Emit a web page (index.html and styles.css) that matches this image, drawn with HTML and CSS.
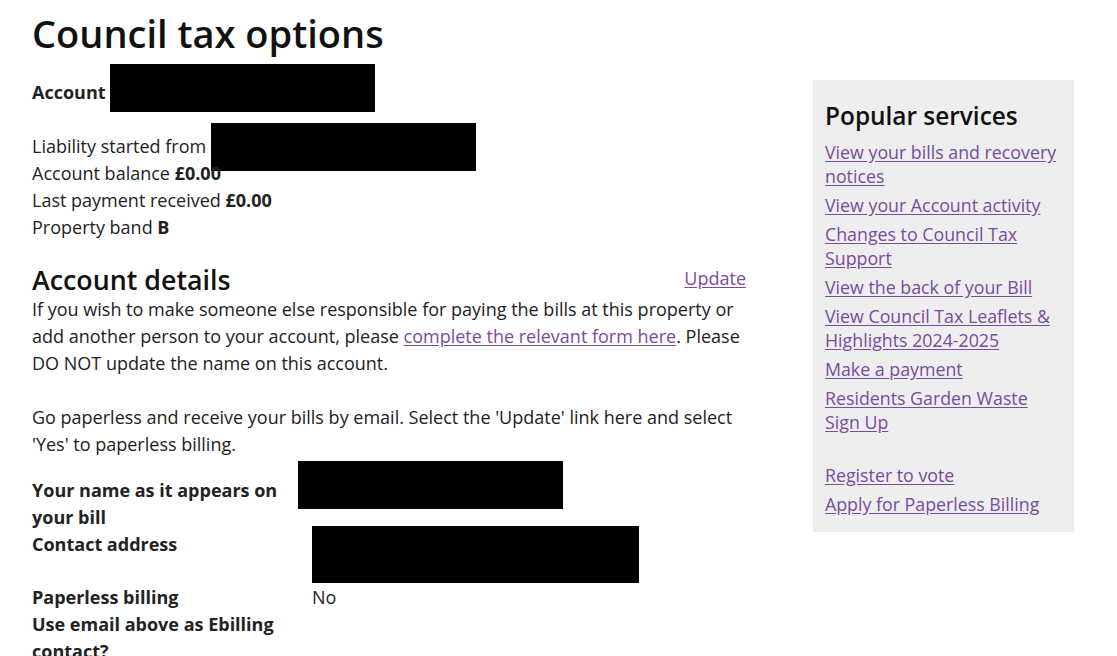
FILE: index.html
```html
<!DOCTYPE html>
<html lang="en">
<head>
<meta charset="utf-8">
<title>Council tax options</title>
<link rel="stylesheet" href="styles.css">
</head>
<body>
<div class="page">
  <main class="main">
    <h1 class="title">Council tax options</h1>
    <p class="account-line"><strong>Account</strong><span class="redact redact-account"></span></p>
    <div class="summary">
      <p class="line">Liability started from <span class="redact redact-liability"></span></p>
      <p class="line">Account balance <strong>£0.00</strong></p>
      <p class="line">Last payment received <strong>£0.00</strong></p>
      <p class="line">Property band <strong>B</strong></p>
    </div>
    <div class="section-head">
      <h2 class="section-title">Account details</h2>
      <a class="link" href="#">Update</a>
    </div>
    <p class="para">If you wish to make someone else responsible for paying the bills at this property or add another person to your account, please <a class="link" href="#">complete the relevant form here</a>. Please DO NOT update the name on this account.</p>
    <p class="para para-gap">Go paperless and receive your bills by email. Select the 'Update' link here and select 'Yes' to paperless billing.</p>
    <dl class="details">
      <div class="row">
        <dt class="label">Your name as it appears on your bill</dt>
        <dd class="value"><span class="redact redact-name"></span></dd>
      </div>
      <div class="row row-address">
        <dt class="label">Contact address</dt>
        <dd class="value"><span class="redact redact-address"></span></dd>
      </div>
      <div class="row">
        <dt class="label">Paperless billing</dt>
        <dd class="value">No</dd>
      </div>
      <div class="row">
        <dt class="label">Use email above as Ebilling contact?</dt>
        <dd class="value"></dd>
      </div>
    </dl>
  </main>
  <aside class="sidebar">
    <h2 class="side-title">Popular services</h2>
    <ul class="side-list">
      <li><a class="link" href="#">View your bills and recovery notices</a></li>
      <li><a class="link" href="#">View your Account activity</a></li>
      <li><a class="link" href="#">Changes to Council Tax Support</a></li>
      <li><a class="link" href="#">View the back of your Bill</a></li>
      <li><a class="link" href="#">View Council Tax Leaflets &amp; Highlights 2024-2025</a></li>
      <li><a class="link" href="#">Make a payment</a></li>
      <li><a class="link" href="#">Residents Garden Waste Sign Up</a></li>
      <li class="spacer"></li>
      <li><a class="link" href="#">Register to vote</a></li>
      <li><a class="link" href="#">Apply for Paperless Billing</a></li>
    </ul>
  </aside>
</div>
</body>
</html>
```
FILE: styles.css
```css
* { box-sizing: border-box; }
html, body { margin: 0; padding: 0; background: #ffffff; }
body {
  font-family: "Open Sans", "Noto Sans", sans-serif;
  font-size: 18px;
  line-height: 27px;
  color: #222222;
}
.page {
  display: flex;
  align-items: flex-start;
  padding: 0 32px;
  gap: 67px;
}
.main { width: 714px; flex: none; }
.title {
  margin: 10px 0 0;
  font-size: 38px;
  line-height: 46px;
  font-weight: 600;
  color: #111;
}
.account-line {
  position: relative;
  margin: 23px 0 0;
}
.account-line strong { font-weight: 700; }
.redact { position: absolute; background: #000; display: block; }
.redact-account { left: 78px; top: -15px; width: 265px; height: 48px; }
.summary { margin-top: 27px; }
.line { margin: 0; position: relative; }
.line strong { font-weight: 700; }
.redact-liability { left: 179px; top: -10px; width: 265px; height: 48px; }
.section-head {
  display: flex;
  justify-content: space-between;
  align-items: center;
  margin-top: 23px;
}
.section-title {
  margin: 0;
  font-size: 26.8px;
  line-height: 32px;
  font-weight: 600;
  color: #111;
}
.section-head .link { margin-top: -4px; }
.link { color: #7a4b9e; text-decoration: underline; text-underline-offset: 2px; }
.para { margin: 0; }
.para-gap { margin-top: 27px; }
.details { margin: 19px 0 0; }
.row {
  display: grid;
  grid-template-columns: 280px 1fr;
  position: relative;
}
.label { margin: 0; font-weight: 700; width: 262px; }
.value { margin: 0; position: relative; }
.redact-name { left: -14px; top: -16px; width: 265px; height: 48px; }
.row-address { min-height: 53px; }
.redact-address { left: 0; top: -5px; width: 327px; height: 57px; }
.sidebar {
  width: 261px;
  flex: none;
  margin-top: 80px;
  background: #eeeeee;
  padding: 20px 12px 11px;
}
.side-title {
  margin: 0;
  font-size: 24.4px;
  line-height: 32px;
  font-weight: 600;
  color: #111;
}
.side-list {
  list-style: none;
  margin: 8px 0 0;
  padding: 0;
  font-size: 17.8px;
  line-height: 24px;
}
.side-list li { margin-bottom: 5px; }
.side-list .spacer { height: 19px; }
```
